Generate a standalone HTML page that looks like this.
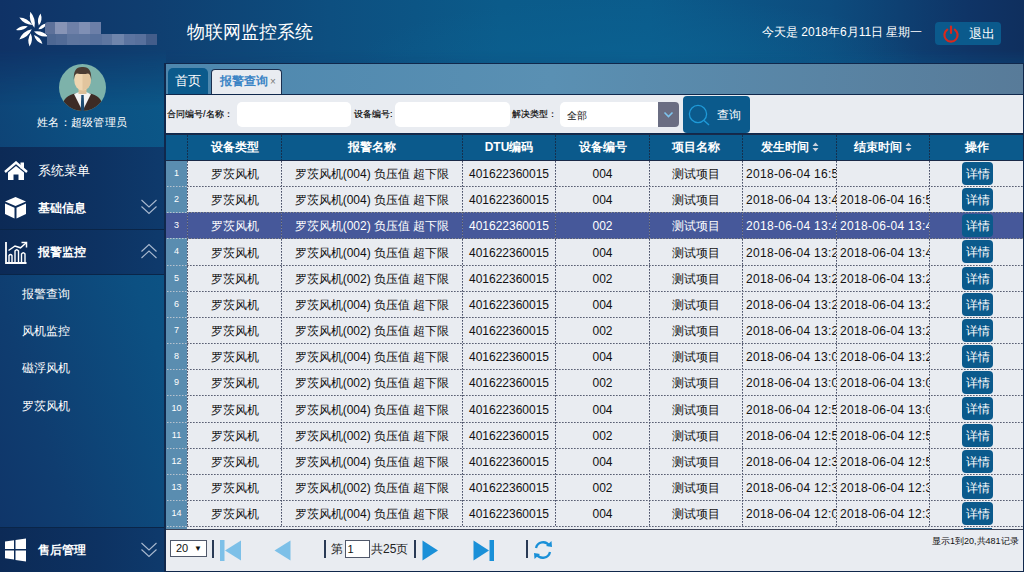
<!DOCTYPE html>
<html><head><meta charset="utf-8">
<style>
*{margin:0;padding:0;box-sizing:border-box}
html,body{width:1024px;height:572px;overflow:hidden}
body{font-family:"Liberation Sans",sans-serif;position:relative;background:#0e4a7c;color:#fff}
.abs{position:absolute}
#bg{left:0;top:0;width:1024px;height:572px;background:linear-gradient(75deg,#0f3266 0%,#0f3a6c 25%,#0e4a7c 55%,#0b5a8a 90%,#0b5b8c 100%)}
#sbg{left:0;top:0;width:166px;height:572px;background:linear-gradient(72deg,#0f3468 0%,#0f3d70 25%,#0c5082 65%,#0b5a8a 100%)}
#hbg{left:0;top:0;width:1024px;height:110px;background:radial-gradient(ellipse 280px 60px at 640px 58px,rgba(11,97,145,0.85),rgba(11,97,145,0)),linear-gradient(90deg,#0f3266 0px,#0f3e70 150px,#0d4f80 330px,#0b5b8a 500px,#0b5c8c 650px,#0d4c7e 830px,#0f3466 970px,#0f2f5e 1024px);-webkit-mask-image:linear-gradient(to bottom,#000 0,#000 50px,transparent 105px)}
.title{left:187px;top:20px;font-size:18px;line-height:24px;color:#fff}
.date{left:762px;top:24px;font-size:12px;line-height:16px;color:#fff}
.logout{left:935px;top:22px;width:66px;height:23px;background:#0b5a8c;border-radius:4px}
.logout span{position:absolute;left:34px;top:3px;font-size:13px;line-height:17px}
/* sidebar */
.menu{left:0;width:164px;background:linear-gradient(90deg,#0c2a56 0%,#0d3262 60%,#0e3a6c 100%)}
.mt{left:38px;font-size:13px;line-height:16px;color:#fff}
.mt.b{font-weight:bold;font-size:12px}
.sub{left:22px;font-size:12px;line-height:14px;color:#fff}
/* main panel */
#panel{left:164px;top:63px;width:860px;height:509px;background:#10284c}
.tabbar{left:166px;top:64px;width:857px;height:30px;background:linear-gradient(90deg,#4d87ae 0%,#5a90b3 45%,#587b99 100%)}
.tab1{left:168px;top:68px;width:40px;height:26px;background:#0b5a8c;border-radius:5px 5px 0 0;font-size:13px;line-height:25px;text-align:center;color:#fff}
.tab2{left:211px;top:69px;width:71px;height:25px;background:#e9ecf1;border-radius:4px 4px 0 0;border:1px solid #1b2f4f;border-bottom:none;font-size:12px;line-height:23px;color:#3b84c5;padding-left:8px;white-space:nowrap;font-weight:bold}
.search{left:166px;top:95px;width:857px;height:38px;background:#e9ecf1}
.lbl{font-size:9px;color:#000;-webkit-text-stroke:0.15px #000;line-height:12px;white-space:nowrap;top:108px !important}
.inp{background:#fff;border-radius:5px}
/* table */
.grid{left:166px;top:134px;width:857px;height:395px;background:#e9ecf1;overflow:hidden}
.thead{left:0;top:1px;width:857px;height:25px;background:#0b5a8c}
.th{position:absolute;top:0;height:25px;line-height:25px;text-align:center;font-size:12px;font-weight:bold;color:#fff;white-space:nowrap}
.numcol{left:0;top:27px;width:21px;height:400px;background:#5a8db0}
.c{font-size:12px;color:#111;text-align:center;white-space:nowrap;overflow:hidden;padding-top:1px}
.c.l{text-align:left;padding-left:3px;letter-spacing:0.3px}
.c.s{color:#fff}
.num{color:#fff;font-size:9px;padding-top:0 !important}
.hl{left:0;width:857px;height:1px;background:repeating-linear-gradient(90deg,#5a6074 0 1px,#8a8f9e 1px 2px,rgba(0,0,0,0) 2px 3px)}
.hl:before{content:"";position:absolute;left:0;top:0;width:21px;height:1px;background:repeating-linear-gradient(90deg,#5a8db0 0 1px,#b8c4d0 1px 2px,#8aa8c0 2px 3px)}
.vl{top:27px;width:1px;height:368px;background:repeating-linear-gradient(180deg,#4a5068 0 1px,#7c8294 1px 2px,rgba(0,0,0,0) 2px 3px)}
.vlh{top:1px;width:1px;height:25px;background:repeating-linear-gradient(180deg,#14304f 0 2px,rgba(0,0,0,0) 2px 3px)}
.btn{position:absolute;left:32px;top:1px;background:#0b5a8c;color:#fff;border-radius:4px;width:31px;height:23px;line-height:25px;font-size:12px;text-align:center}
.pager{left:166px;top:530px;width:857px;height:41px;background:#e9ecf1}
.sep{position:absolute;width:2px;height:18px;background:#2a3a55}
</style></head>
<body>
<div id="bg" class="abs"></div>
<div id="sbg" class="abs"></div>
<div id="hbg" class="abs"></div>

<!-- logo -->
<svg class="abs" style="left:0;top:0" width="60" height="60" viewBox="0 0 60 60"><path d="M34.4 27.8Q36.4 18.7 30.3 11.7Q28.3 20.8 34.4 27.8ZM38.8 25.6Q43.1 20.1 40.6 13.5Q36.3 19.0 38.8 25.6ZM38.4 29.3Q44.4 29.0 46.8 23.4Q40.8 23.7 38.4 29.3ZM34.0 31.5Q39.7 37.6 48.0 36.2Q42.3 30.1 34.0 31.5ZM34.0 35.0Q35.7 41.8 42.4 44.0Q40.7 37.2 34.0 35.0ZM30.7 33.3Q26.6 39.6 29.6 46.5Q33.7 40.2 30.7 33.3ZM31.8 29.3Q22.9 31.1 19.3 39.5Q28.2 37.7 31.8 29.3ZM27.8 26.3Q20.9 24.9 16.0 30.0Q22.9 31.4 27.8 26.3ZM32.2 24.9Q27.6 17.9 19.3 17.5Q23.9 24.5 32.2 24.9Z" fill="#fff"/></svg>
<!-- mosaic -->
<div class="abs" style="left:45px;top:22px;width:56px;height:12px;border-radius:3px 0 0 0;background:linear-gradient(90deg,#5d719a 0 10px,#8794b6 10px 22px,#6e80a8 22px 34px,#7f8fb4 34px 45px,#6c7fa8 45px 56px)"></div>
<div class="abs" style="left:47px;top:34px;width:110px;height:11px;background:linear-gradient(90deg,#4d6792 0 9px,#526b96 9px 20px,#5e759e 20px 32px,#5d749e 32px 43px,#57709c 43px 55px,#5e76a0 55px 65px,#6f85ac 65px 77px,#5c74a0 77px 88px,#58709c 88px 99px,#435d8a 99px 110px)"></div>
<div class="abs title">物联网监控系统</div>
<div class="abs date">今天是 2018年6月11日 星期一</div>
<div class="abs logout">
 <svg style="position:absolute;left:7px;top:3px" width="18" height="18" viewBox="0 0 18 18">
  <path d="M5.2 4.6 A6.6 6.6 0 1 0 12.8 4.6" fill="none" stroke="#d9281c" stroke-width="2.2" stroke-linecap="round"/>
  <line x1="9" y1="1.5" x2="9" y2="8" stroke="#d9281c" stroke-width="2.2" stroke-linecap="round"/>
 </svg>
 <span>退出</span>
</div>

<!-- avatar -->
<svg class="abs" style="left:59px;top:64px" width="47" height="47" viewBox="0 0 47 47">
 <defs><clipPath id="cc"><circle cx="23.5" cy="23.5" r="23.5"/></clipPath></defs>
 <circle cx="23.5" cy="23.5" r="23.5" fill="#7db2aa"/>
 <g clip-path="url(#cc)">
  <path d="M2 47 Q3 33 14 30 L23.5 28 L33 30 Q44 33 45 47Z" fill="#3d2b25"/>
  <path d="M15 30 L23.5 47 L32 30 L27 28 L20 28Z" fill="#f3f3f3"/>
  <path d="M22.3 31 L24.7 31 L25.3 47 L21.7 47Z" fill="#1d4a70"/>
  <rect x="19.5" y="22" width="8" height="8" fill="#dcbf98"/>
  <ellipse cx="23.5" cy="16" rx="8.3" ry="10.5" fill="#efd5b0"/>
  <path d="M23.5 5.5 L23.5 26.5 Q31.8 25.5 31.8 16 Q31.8 5.5 23.5 5.5Z" fill="#e2c59e"/>
  <path d="M14.8 16 Q14 2.5 23.5 3 Q33 2.5 32.2 16 Q31.5 9.5 29 9.5 Q24 10.5 18 9.5 Q15.5 9.5 14.8 16Z" fill="#4b3c33"/>
 </g>
</svg>
<div class="abs" style="left:37px;top:116px;font-size:11px;line-height:13px;color:#fff;white-space:nowrap;letter-spacing:0.25px">姓名：超级管理员</div>

<!-- menus -->
<div class="abs menu" style="top:147px;height:82px"></div>
<div class="abs" style="left:0;top:229px;width:164px;height:1px;background:#0a2548"></div>
<div class="abs menu" style="top:230px;height:44px"></div>
<div class="abs" style="left:0;top:274px;width:164px;height:1px;background:#0a2548"></div>
<div class="abs" style="left:0;top:527px;width:164px;height:1px;background:#0a2548"></div>
<div class="abs menu" style="top:528px;height:44px"></div>

<!-- house -->
<svg class="abs" style="left:4px;top:161px" width="24" height="20" viewBox="0 0 24 20">
 <path d="M1 11 L12 1.5 L23 11" fill="none" stroke="#fff" stroke-width="2.4" stroke-linejoin="miter"/>
 <rect x="16.5" y="1.5" width="3.5" height="6" fill="#fff"/>
 <path d="M4 11.5 L12 5 L20 11.5 L20 19 L14.5 19 L14.5 13.5 L9.5 13.5 L9.5 19 L4 19Z" fill="#fff"/>
</svg>
<div class="abs mt" style="top:163px">系统菜单</div>
<!-- cube -->
<svg class="abs" style="left:4px;top:196px" width="23" height="23" viewBox="0 0 23 23">
 <path d="M11.5 1 L22 5.5 L11.5 10 L1 5.5Z" fill="#fff"/>
 <path d="M1 7.5 L10.5 11.8 L10.5 22.5 L1 18Z" fill="#fff"/>
 <path d="M22 7.5 L12.5 11.8 L12.5 22.5 L22 18Z" fill="#fff"/>
</svg>
<div class="abs mt b" style="top:199.5px">基础信息</div>
<svg class="abs" style="left:140px;top:198px" width="18" height="17" viewBox="0 0 18 17">
 <path d="M1.5 2 L9 9 L16.5 2 M1.5 8.5 L9 15.5 L16.5 8.5" fill="none" stroke="#a9b9cf" stroke-width="1.1"/>
</svg>
<!-- chart -->
<svg class="abs" style="left:4px;top:241px" width="24" height="24" viewBox="0 0 24 24">
 <path d="M2 1 L2 22 L22.5 22" fill="none" stroke="#fff" stroke-width="1.8"/>
 <path d="M5 21 L5 14.5 Q6.5 12.5 8 14.5 L8 21" fill="none" stroke="#fff" stroke-width="1.4"/>
 <path d="M11 21 L11 10 Q12.8 7.5 14.5 10 L14.5 21" fill="none" stroke="#fff" stroke-width="1.4"/>
 <path d="M17.5 21 L17.5 13 Q19.3 10.5 21 13 L21 21" fill="none" stroke="#fff" stroke-width="1.4"/>
 <path d="M4.5 9.5 L11 5 L16.5 6.8 L22 2" fill="none" stroke="#fff" stroke-width="1.5"/>
 <path d="M17.5 1.5 L22.5 1.5 L22.5 6.5" fill="none" stroke="#fff" stroke-width="1.5"/>
</svg>
<div class="abs mt b" style="top:243.5px">报警监控</div>
<svg class="abs" style="left:140px;top:243px" width="18" height="17" viewBox="0 0 18 17">
 <path d="M1.5 8.5 L9 1.5 L16.5 8.5 M1.5 15 L9 8 L16.5 15" fill="none" stroke="#a9b9cf" stroke-width="1.1"/>
</svg>

<div class="abs sub" style="top:287px">报警查询</div>
<div class="abs sub" style="top:324px">风机监控</div>
<div class="abs sub" style="top:361px">磁浮风机</div>
<div class="abs sub" style="top:399px">罗茨风机</div>

<!-- windows -->
<svg class="abs" style="left:4px;top:538px" width="23" height="24" viewBox="0 0 23 24">
 <path d="M1 3.5 L10 2.2 L10 11 L1 11Z M11.5 2 L22 0.5 L22 11 L11.5 11Z M1 12.5 L10 12.5 L10 21.5 L1 20.3Z M11.5 12.5 L22 12.5 L22 23.5 L11.5 22Z" fill="#fff"/>
</svg>
<div class="abs mt b" style="top:542px">售后管理</div>
<svg class="abs" style="left:140px;top:541px" width="18" height="17" viewBox="0 0 18 17">
 <path d="M1.5 2 L9 9 L16.5 2 M1.5 8.5 L9 15.5 L16.5 8.5" fill="none" stroke="#a9b9cf" stroke-width="1.1"/>
</svg>

<!-- main panel -->
<div id="panel" class="abs"></div>
<div class="abs tabbar"></div>
<div class="abs tab1">首页</div>
<div class="abs tab2">报警查询<span style="position:absolute;left:58px;top:0;font-size:10px;color:#7a7a7a;font-weight:normal">×</span></div>
<div class="abs search"></div>
<div class="abs lbl" style="left:167px;top:107px">合同编号/名称：</div>
<div class="abs inp" style="left:237px;top:102px;width:114px;height:25px"></div>
<div class="abs lbl" style="left:354px;top:107px">设备编号:</div>
<div class="abs inp" style="left:395px;top:102px;width:115px;height:25px"></div>
<div class="abs lbl" style="left:512px;top:107px">解决类型：</div>
<div class="abs inp" style="left:560px;top:102px;width:119px;height:25px;border-radius:5px"></div>
<div class="abs" style="left:658px;top:102px;width:21px;height:25px;background:#6a6d82;border-radius:0 4px 4px 0"></div>
<svg class="abs" style="left:663px;top:111px" width="11" height="8" viewBox="0 0 11 8"><path d="M1.5 1.5 L5.5 5.5 L9.5 1.5" fill="none" stroke="#7fc4ee" stroke-width="1.6"/></svg>
<div class="abs" style="left:567px;top:109px;font-size:10px;line-height:13px;color:#111">全部</div>
<div class="abs" style="left:683px;top:96px;width:67px;height:37px;background:#0b5a8c;border-radius:4px"></div>
<svg class="abs" style="left:686px;top:102px" width="26" height="26" viewBox="0 0 26 26">
 <circle cx="12" cy="12" r="8.6" fill="none" stroke="#1f9ad8" stroke-width="1.3"/>
 <line x1="18" y1="18.5" x2="23" y2="23" stroke="#1f9ad8" stroke-width="1.4"/>
</svg>
<div class="abs" style="left:717px;top:107px;font-size:12px;line-height:16px;color:#fff">查询</div>

<div class="abs grid">
 <div class="abs" style="left:0;top:0;width:857px;height:1px;background:#1a2a48"></div>
 <div class="abs thead">
<div class="th" style="left:22px;width:93px">设备类型</div>
<div class="th" style="left:116px;width:180px">报警名称</div>
<div class="th" style="left:297px;width:92px">DTU编码</div>
<div class="th" style="left:390px;width:93px">设备编号</div>
<div class="th" style="left:484px;width:92px">项目名称</div>
<div class="th" style="left:577px;width:93px">发生时间<svg width="7" height="10" viewBox="0 0 7 10" style="vertical-align:-1px;margin-left:3px"><path d="M0.5 4 L3.5 0.5 L6.5 4Z M0.5 6 L3.5 9.5 L6.5 6Z" fill="#c8d0dc"/></svg></div>
<div class="th" style="left:671px;width:92px">结束时间<svg width="7" height="10" viewBox="0 0 7 10" style="vertical-align:-1px;margin-left:3px"><path d="M0.5 4 L3.5 0.5 L6.5 4Z M0.5 6 L3.5 9.5 L6.5 6Z" fill="#c8d0dc"/></svg></div>
<div class="th" style="left:764px;width:93px">操作</div>
 </div>
 <div class="abs numcol"></div>
 <div class="abs" style="left:0;top:26px;width:857px;height:1px;background:#1a2a48"></div>
<div class="abs c num" style="left:0;top:27px;width:21px;height:25px;line-height:24px">1</div>
<div class="abs c" style="left:22px;top:27px;width:93px;height:25px;line-height:25px">罗茨风机</div>
<div class="abs c" style="left:116px;top:27px;width:180px;height:25px;line-height:25px">罗茨风机(004) 负压值 超下限</div>
<div class="abs c" style="left:297px;top:27px;width:92px;height:25px;line-height:25px">401622360015</div>
<div class="abs c" style="left:390px;top:27px;width:93px;height:25px;line-height:25px">004</div>
<div class="abs c" style="left:484px;top:27px;width:92px;height:25px;line-height:25px">测试项目</div>
<div class="abs c l" style="left:577px;top:27px;width:93px;height:25px;line-height:25px">2018-06-04 16:56</div>
<div class="abs c l" style="left:671px;top:27px;width:92px;height:25px;line-height:25px"></div>
<div class="abs c" style="left:764px;top:27px;width:93px;height:25px;line-height:25px"><span class="btn">详情</span></div>
<div class="abs c num" style="left:0;top:53px;width:21px;height:25px;line-height:24px">2</div>
<div class="abs c" style="left:22px;top:53px;width:93px;height:25px;line-height:25px">罗茨风机</div>
<div class="abs c" style="left:116px;top:53px;width:180px;height:25px;line-height:25px">罗茨风机(004) 负压值 超下限</div>
<div class="abs c" style="left:297px;top:53px;width:92px;height:25px;line-height:25px">401622360015</div>
<div class="abs c" style="left:390px;top:53px;width:93px;height:25px;line-height:25px">004</div>
<div class="abs c" style="left:484px;top:53px;width:92px;height:25px;line-height:25px">测试项目</div>
<div class="abs c l" style="left:577px;top:53px;width:93px;height:25px;line-height:25px">2018-06-04 13:46</div>
<div class="abs c l" style="left:671px;top:53px;width:92px;height:25px;line-height:25px">2018-06-04 16:56</div>
<div class="abs c" style="left:764px;top:53px;width:93px;height:25px;line-height:25px"><span class="btn">详情</span></div>
<div class="abs" style="left:0;top:78px;width:857px;height:27px;background:#46589a"></div>
<div class="abs c num s" style="left:0;top:79px;width:21px;height:25px;line-height:24px">3</div>
<div class="abs c s" style="left:22px;top:79px;width:93px;height:25px;line-height:25px">罗茨风机</div>
<div class="abs c s" style="left:116px;top:79px;width:180px;height:25px;line-height:25px">罗茨风机(002) 负压值 超下限</div>
<div class="abs c s" style="left:297px;top:79px;width:92px;height:25px;line-height:25px">401622360015</div>
<div class="abs c s" style="left:390px;top:79px;width:93px;height:25px;line-height:25px">002</div>
<div class="abs c s" style="left:484px;top:79px;width:92px;height:25px;line-height:25px">测试项目</div>
<div class="abs c l s" style="left:577px;top:79px;width:93px;height:25px;line-height:25px">2018-06-04 13:46</div>
<div class="abs c l s" style="left:671px;top:79px;width:92px;height:25px;line-height:25px">2018-06-04 13:46</div>
<div class="abs c s" style="left:764px;top:79px;width:93px;height:25px;line-height:25px"><span class="btn">详情</span></div>
<div class="abs c num" style="left:0;top:105px;width:21px;height:26px;line-height:25px">4</div>
<div class="abs c" style="left:22px;top:105px;width:93px;height:26px;line-height:26px">罗茨风机</div>
<div class="abs c" style="left:116px;top:105px;width:180px;height:26px;line-height:26px">罗茨风机(004) 负压值 超下限</div>
<div class="abs c" style="left:297px;top:105px;width:92px;height:26px;line-height:26px">401622360015</div>
<div class="abs c" style="left:390px;top:105px;width:93px;height:26px;line-height:26px">004</div>
<div class="abs c" style="left:484px;top:105px;width:92px;height:26px;line-height:26px">测试项目</div>
<div class="abs c l" style="left:577px;top:105px;width:93px;height:26px;line-height:26px">2018-06-04 13:26</div>
<div class="abs c l" style="left:671px;top:105px;width:92px;height:26px;line-height:26px">2018-06-04 13:46</div>
<div class="abs c" style="left:764px;top:105px;width:93px;height:26px;line-height:26px"><span class="btn">详情</span></div>
<div class="abs c num" style="left:0;top:132px;width:21px;height:25px;line-height:24px">5</div>
<div class="abs c" style="left:22px;top:132px;width:93px;height:25px;line-height:25px">罗茨风机</div>
<div class="abs c" style="left:116px;top:132px;width:180px;height:25px;line-height:25px">罗茨风机(002) 负压值 超下限</div>
<div class="abs c" style="left:297px;top:132px;width:92px;height:25px;line-height:25px">401622360015</div>
<div class="abs c" style="left:390px;top:132px;width:93px;height:25px;line-height:25px">002</div>
<div class="abs c" style="left:484px;top:132px;width:92px;height:25px;line-height:25px">测试项目</div>
<div class="abs c l" style="left:577px;top:132px;width:93px;height:25px;line-height:25px">2018-06-04 13:26</div>
<div class="abs c l" style="left:671px;top:132px;width:92px;height:25px;line-height:25px">2018-06-04 13:26</div>
<div class="abs c" style="left:764px;top:132px;width:93px;height:25px;line-height:25px"><span class="btn">详情</span></div>
<div class="abs c num" style="left:0;top:158px;width:21px;height:25px;line-height:24px">6</div>
<div class="abs c" style="left:22px;top:158px;width:93px;height:25px;line-height:25px">罗茨风机</div>
<div class="abs c" style="left:116px;top:158px;width:180px;height:25px;line-height:25px">罗茨风机(004) 负压值 超下限</div>
<div class="abs c" style="left:297px;top:158px;width:92px;height:25px;line-height:25px">401622360015</div>
<div class="abs c" style="left:390px;top:158px;width:93px;height:25px;line-height:25px">004</div>
<div class="abs c" style="left:484px;top:158px;width:92px;height:25px;line-height:25px">测试项目</div>
<div class="abs c l" style="left:577px;top:158px;width:93px;height:25px;line-height:25px">2018-06-04 13:26</div>
<div class="abs c l" style="left:671px;top:158px;width:92px;height:25px;line-height:25px">2018-06-04 13:26</div>
<div class="abs c" style="left:764px;top:158px;width:93px;height:25px;line-height:25px"><span class="btn">详情</span></div>
<div class="abs c num" style="left:0;top:184px;width:21px;height:25px;line-height:24px">7</div>
<div class="abs c" style="left:22px;top:184px;width:93px;height:25px;line-height:25px">罗茨风机</div>
<div class="abs c" style="left:116px;top:184px;width:180px;height:25px;line-height:25px">罗茨风机(002) 负压值 超下限</div>
<div class="abs c" style="left:297px;top:184px;width:92px;height:25px;line-height:25px">401622360015</div>
<div class="abs c" style="left:390px;top:184px;width:93px;height:25px;line-height:25px">002</div>
<div class="abs c" style="left:484px;top:184px;width:92px;height:25px;line-height:25px">测试项目</div>
<div class="abs c l" style="left:577px;top:184px;width:93px;height:25px;line-height:25px">2018-06-04 13:26</div>
<div class="abs c l" style="left:671px;top:184px;width:92px;height:25px;line-height:25px">2018-06-04 13:26</div>
<div class="abs c" style="left:764px;top:184px;width:93px;height:25px;line-height:25px"><span class="btn">详情</span></div>
<div class="abs c num" style="left:0;top:210px;width:21px;height:25px;line-height:24px">8</div>
<div class="abs c" style="left:22px;top:210px;width:93px;height:25px;line-height:25px">罗茨风机</div>
<div class="abs c" style="left:116px;top:210px;width:180px;height:25px;line-height:25px">罗茨风机(004) 负压值 超下限</div>
<div class="abs c" style="left:297px;top:210px;width:92px;height:25px;line-height:25px">401622360015</div>
<div class="abs c" style="left:390px;top:210px;width:93px;height:25px;line-height:25px">004</div>
<div class="abs c" style="left:484px;top:210px;width:92px;height:25px;line-height:25px">测试项目</div>
<div class="abs c l" style="left:577px;top:210px;width:93px;height:25px;line-height:25px">2018-06-04 13:06</div>
<div class="abs c l" style="left:671px;top:210px;width:92px;height:25px;line-height:25px">2018-06-04 13:26</div>
<div class="abs c" style="left:764px;top:210px;width:93px;height:25px;line-height:25px"><span class="btn">详情</span></div>
<div class="abs c num" style="left:0;top:236px;width:21px;height:25px;line-height:24px">9</div>
<div class="abs c" style="left:22px;top:236px;width:93px;height:25px;line-height:25px">罗茨风机</div>
<div class="abs c" style="left:116px;top:236px;width:180px;height:25px;line-height:25px">罗茨风机(002) 负压值 超下限</div>
<div class="abs c" style="left:297px;top:236px;width:92px;height:25px;line-height:25px">401622360015</div>
<div class="abs c" style="left:390px;top:236px;width:93px;height:25px;line-height:25px">002</div>
<div class="abs c" style="left:484px;top:236px;width:92px;height:25px;line-height:25px">测试项目</div>
<div class="abs c l" style="left:577px;top:236px;width:93px;height:25px;line-height:25px">2018-06-04 13:06</div>
<div class="abs c l" style="left:671px;top:236px;width:92px;height:25px;line-height:25px">2018-06-04 13:06</div>
<div class="abs c" style="left:764px;top:236px;width:93px;height:25px;line-height:25px"><span class="btn">详情</span></div>
<div class="abs c num" style="left:0;top:262px;width:21px;height:26px;line-height:25px">10</div>
<div class="abs c" style="left:22px;top:262px;width:93px;height:26px;line-height:26px">罗茨风机</div>
<div class="abs c" style="left:116px;top:262px;width:180px;height:26px;line-height:26px">罗茨风机(004) 负压值 超下限</div>
<div class="abs c" style="left:297px;top:262px;width:92px;height:26px;line-height:26px">401622360015</div>
<div class="abs c" style="left:390px;top:262px;width:93px;height:26px;line-height:26px">004</div>
<div class="abs c" style="left:484px;top:262px;width:92px;height:26px;line-height:26px">测试项目</div>
<div class="abs c l" style="left:577px;top:262px;width:93px;height:26px;line-height:26px">2018-06-04 12:56</div>
<div class="abs c l" style="left:671px;top:262px;width:92px;height:26px;line-height:26px">2018-06-04 13:06</div>
<div class="abs c" style="left:764px;top:262px;width:93px;height:26px;line-height:26px"><span class="btn">详情</span></div>
<div class="abs c num" style="left:0;top:289px;width:21px;height:25px;line-height:24px">11</div>
<div class="abs c" style="left:22px;top:289px;width:93px;height:25px;line-height:25px">罗茨风机</div>
<div class="abs c" style="left:116px;top:289px;width:180px;height:25px;line-height:25px">罗茨风机(002) 负压值 超下限</div>
<div class="abs c" style="left:297px;top:289px;width:92px;height:25px;line-height:25px">401622360015</div>
<div class="abs c" style="left:390px;top:289px;width:93px;height:25px;line-height:25px">002</div>
<div class="abs c" style="left:484px;top:289px;width:92px;height:25px;line-height:25px">测试项目</div>
<div class="abs c l" style="left:577px;top:289px;width:93px;height:25px;line-height:25px">2018-06-04 12:56</div>
<div class="abs c l" style="left:671px;top:289px;width:92px;height:25px;line-height:25px">2018-06-04 12:56</div>
<div class="abs c" style="left:764px;top:289px;width:93px;height:25px;line-height:25px"><span class="btn">详情</span></div>
<div class="abs c num" style="left:0;top:315px;width:21px;height:25px;line-height:24px">12</div>
<div class="abs c" style="left:22px;top:315px;width:93px;height:25px;line-height:25px">罗茨风机</div>
<div class="abs c" style="left:116px;top:315px;width:180px;height:25px;line-height:25px">罗茨风机(004) 负压值 超下限</div>
<div class="abs c" style="left:297px;top:315px;width:92px;height:25px;line-height:25px">401622360015</div>
<div class="abs c" style="left:390px;top:315px;width:93px;height:25px;line-height:25px">004</div>
<div class="abs c" style="left:484px;top:315px;width:92px;height:25px;line-height:25px">测试项目</div>
<div class="abs c l" style="left:577px;top:315px;width:93px;height:25px;line-height:25px">2018-06-04 12:36</div>
<div class="abs c l" style="left:671px;top:315px;width:92px;height:25px;line-height:25px">2018-06-04 12:56</div>
<div class="abs c" style="left:764px;top:315px;width:93px;height:25px;line-height:25px"><span class="btn">详情</span></div>
<div class="abs c num" style="left:0;top:341px;width:21px;height:25px;line-height:24px">13</div>
<div class="abs c" style="left:22px;top:341px;width:93px;height:25px;line-height:25px">罗茨风机</div>
<div class="abs c" style="left:116px;top:341px;width:180px;height:25px;line-height:25px">罗茨风机(002) 负压值 超下限</div>
<div class="abs c" style="left:297px;top:341px;width:92px;height:25px;line-height:25px">401622360015</div>
<div class="abs c" style="left:390px;top:341px;width:93px;height:25px;line-height:25px">002</div>
<div class="abs c" style="left:484px;top:341px;width:92px;height:25px;line-height:25px">测试项目</div>
<div class="abs c l" style="left:577px;top:341px;width:93px;height:25px;line-height:25px">2018-06-04 12:36</div>
<div class="abs c l" style="left:671px;top:341px;width:92px;height:25px;line-height:25px">2018-06-04 12:36</div>
<div class="abs c" style="left:764px;top:341px;width:93px;height:25px;line-height:25px"><span class="btn">详情</span></div>
<div class="abs c num" style="left:0;top:367px;width:21px;height:25px;line-height:24px">14</div>
<div class="abs c" style="left:22px;top:367px;width:93px;height:25px;line-height:25px">罗茨风机</div>
<div class="abs c" style="left:116px;top:367px;width:180px;height:25px;line-height:25px">罗茨风机(004) 负压值 超下限</div>
<div class="abs c" style="left:297px;top:367px;width:92px;height:25px;line-height:25px">401622360015</div>
<div class="abs c" style="left:390px;top:367px;width:93px;height:25px;line-height:25px">004</div>
<div class="abs c" style="left:484px;top:367px;width:92px;height:25px;line-height:25px">测试项目</div>
<div class="abs c l" style="left:577px;top:367px;width:93px;height:25px;line-height:25px">2018-06-04 12:06</div>
<div class="abs c l" style="left:671px;top:367px;width:92px;height:25px;line-height:25px">2018-06-04 12:36</div>
<div class="abs c" style="left:764px;top:367px;width:93px;height:25px;line-height:25px"><span class="btn">详情</span></div>
<div class="abs hl" style="top:52px"></div>
<div class="abs hl" style="top:78px"></div>
<div class="abs hl" style="top:104px"></div>
<div class="abs hl" style="top:131px"></div>
<div class="abs hl" style="top:157px"></div>
<div class="abs hl" style="top:183px"></div>
<div class="abs hl" style="top:209px"></div>
<div class="abs hl" style="top:235px"></div>
<div class="abs hl" style="top:261px"></div>
<div class="abs hl" style="top:288px"></div>
<div class="abs hl" style="top:314px"></div>
<div class="abs hl" style="top:340px"></div>
<div class="abs hl" style="top:366px"></div>
<div class="abs hl" style="top:392px"></div>
<div class="abs vl" style="left:21px"></div>
<div class="abs vlh" style="left:21px"></div>
<div class="abs vl" style="left:115px"></div>
<div class="abs vlh" style="left:115px"></div>
<div class="abs vl" style="left:296px"></div>
<div class="abs vlh" style="left:296px"></div>
<div class="abs vl" style="left:389px"></div>
<div class="abs vlh" style="left:389px"></div>
<div class="abs vl" style="left:483px"></div>
<div class="abs vlh" style="left:483px"></div>
<div class="abs vl" style="left:576px"></div>
<div class="abs vlh" style="left:576px"></div>
<div class="abs vl" style="left:670px"></div>
<div class="abs vlh" style="left:670px"></div>
<div class="abs vl" style="left:763px"></div>
<div class="abs vlh" style="left:763px"></div>
</div>
<div class="abs" style="left:166px;top:527px;width:857px;height:2px;background:#e9ecf1"></div><div class="abs" style="left:166px;top:527px;width:21px;height:2px;background:#5a8db0"></div><div class="abs" style="left:964px;top:528px;width:28px;height:1px;background:#0b5a8c"></div><div class="abs" style="left:166px;top:529px;width:857px;height:1px;background:#3c4255"></div>
<div class="abs pager">
 <div class="abs" style="left:4px;top:10px;width:37px;height:17px;border:1px solid #50586a;background:#fff;font-size:11px;line-height:15px;color:#111;padding-left:5px">20<span style="position:absolute;right:4px;top:0;font-size:8px">▼</span></div>
 <div class="sep" style="left:46px;top:9.5px"></div>
 <svg class="abs" style="left:54px;top:9.5px" width="22" height="21" viewBox="0 0 22 21"><rect x="0" y="0" width="4.5" height="21" fill="#7dc0e8"/><path d="M5 10.5 L21 0.5 L21 20.5Z" fill="#7dc0e8"/></svg>
 <svg class="abs" style="left:108px;top:9.5px" width="17" height="21" viewBox="0 0 17 21"><path d="M0.5 10.5 L16.5 0.5 L16.5 20.5Z" fill="#7dc0e8"/></svg>
 <div class="sep" style="left:158px;top:9.5px"></div>
 <div class="abs" style="left:165px;top:11px;font-size:12px;line-height:17px;color:#222">第</div>
 <div class="abs" style="left:178.5px;top:10px;width:25px;height:18px;border:1px solid #50586a;background:#fff;font-size:11px;line-height:16px;color:#111;padding-left:2px">1</div>
 <div class="abs" style="left:205px;top:11px;font-size:12px;line-height:17px;color:#222">共25页</div>
 <div class="sep" style="left:248px;top:9.5px"></div>
 <svg class="abs" style="left:256px;top:9.5px" width="17" height="21" viewBox="0 0 17 21"><path d="M0.5 0.5 L16 10.5 L0.5 20.5Z" fill="#1a90d8"/></svg>
 <svg class="abs" style="left:307px;top:9.5px" width="22" height="21" viewBox="0 0 22 21"><path d="M0.5 0.5 L16 10.5 L0.5 20.5Z" fill="#1a90d8"/><rect x="16.5" y="0" width="4.5" height="21" fill="#1a90d8"/></svg>
 <div class="sep" style="left:359.5px;top:9.5px"></div>
 <svg class="abs" style="left:366px;top:9px" width="22" height="22" viewBox="0 0 22 22">
  <path d="M4 9 A7.3 7.3 0 0 1 17.2 6.5" fill="none" stroke="#1a90d8" stroke-width="2.3"/>
  <path d="M18 13 A7.3 7.3 0 0 1 4.8 15.5" fill="none" stroke="#1a90d8" stroke-width="2.3"/>
  <path d="M14 7 L20 8 L19.5 2Z" fill="#1a90d8"/>
  <path d="M8 15 L2 14 L2.5 20Z" fill="#1a90d8"/>
 </svg>
 <div class="abs" style="left:766px;top:5px;font-size:9px;line-height:12px;color:#111;white-space:nowrap">显示1到20,共481记录</div>
</div>
</body></html>
